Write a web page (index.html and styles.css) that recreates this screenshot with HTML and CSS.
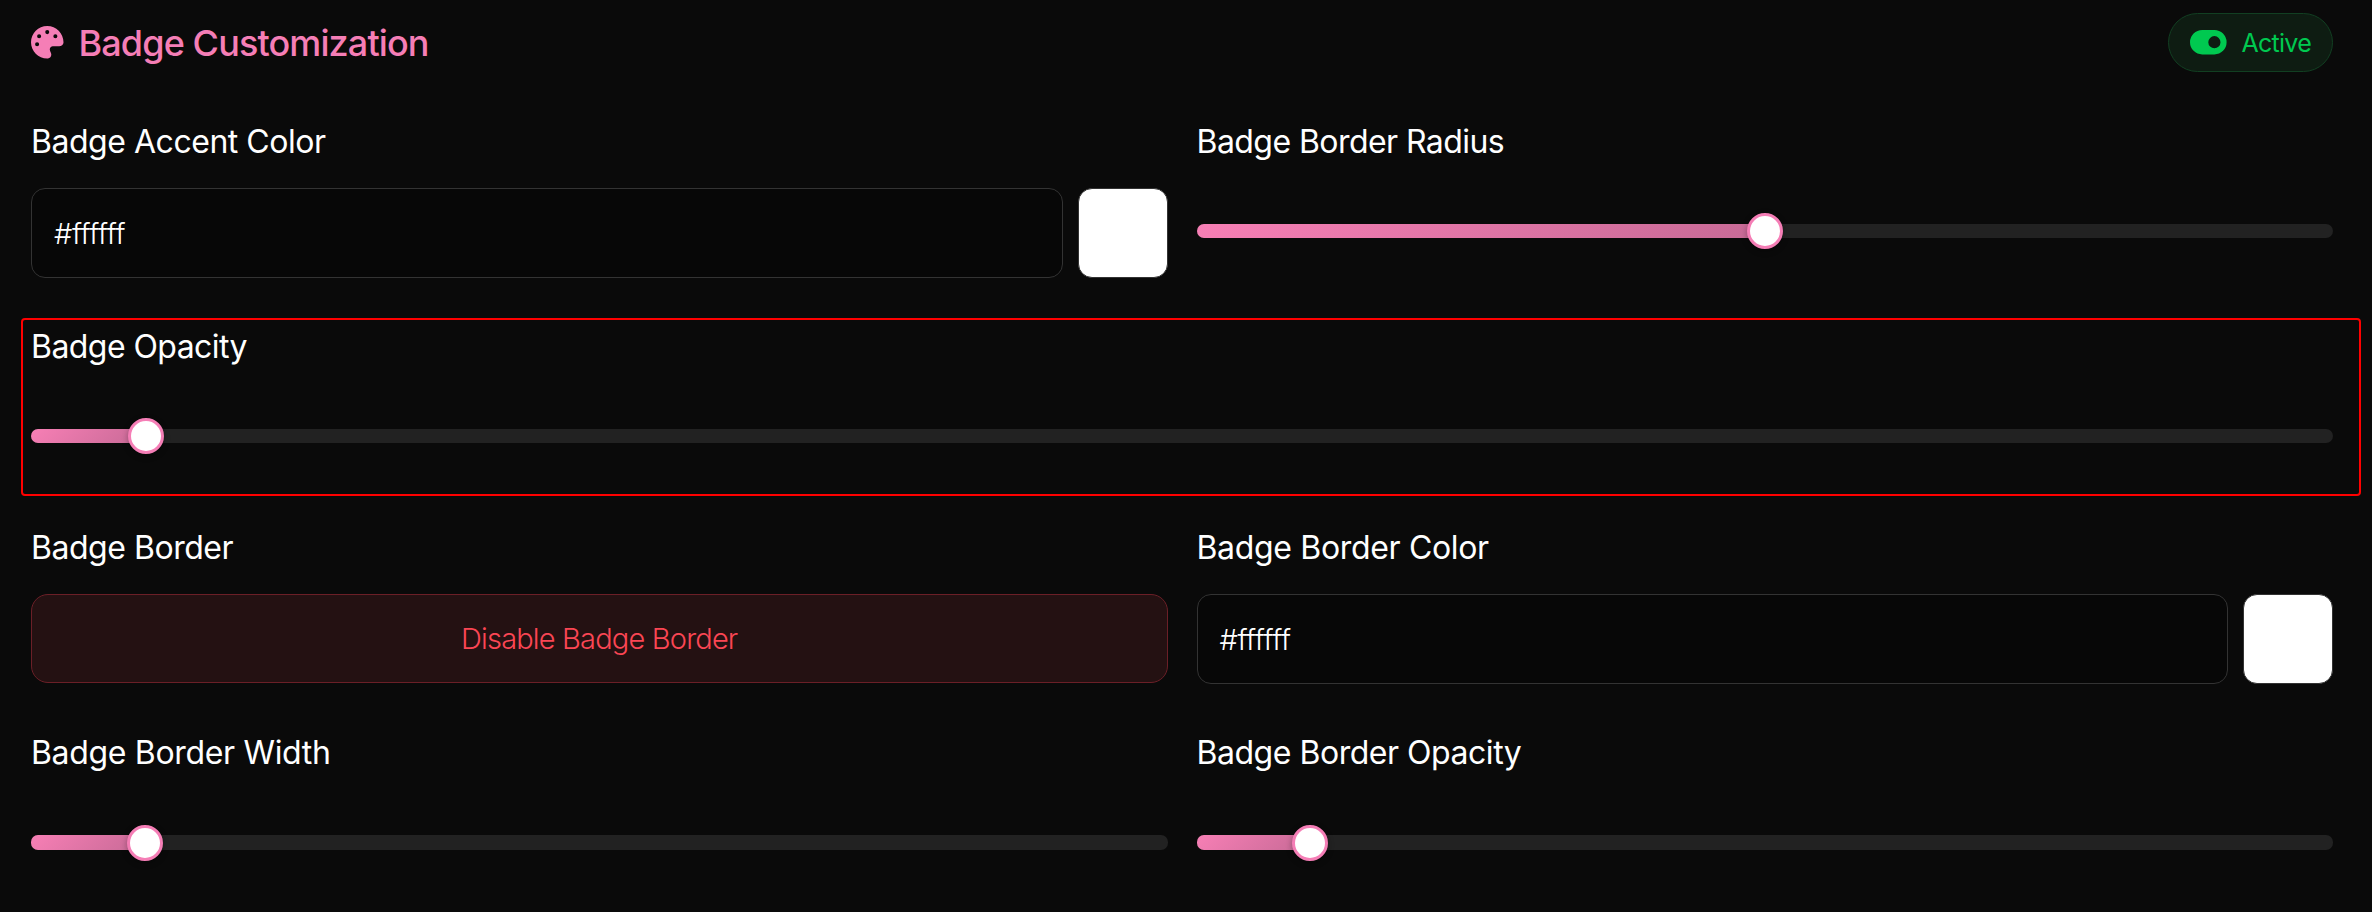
FILE: index.html
```html
<!DOCTYPE html>
<html lang="en">
<head>
<meta charset="utf-8">
<title>Badge Customization</title>
<link rel="stylesheet" href="styles.css">
</head>
<body>
<main class="panel">
  <header class="header">
    <h1 class="title">
      <svg class="title-icon" viewBox="0 0 512 512" fill="currentColor"><path d="M512 256c0 .9 0 1.800 0 2.700c-.4 36.500-33.600 61.300-70.100 61.300L344 320c-26.500 0-48 21.500-48 48c0 3.400 .4 6.700 1 9.900c2.100 10.200 6.500 20 10.800 29.900c6.100 13.800 12.100 27.500 12.100 42c0 31.800-21.600 60.700-53.400 62c-3.500 .1-7 .2-10.600 .2C114.600 512 0 397.400 0 256S114.600 0 256 0S512 114.600 512 256zM128 288a32 32 0 1 0 -64 0 32 32 0 1 0 64 0zm0-96a32 32 0 1 0 0-64 32 32 0 1 0 0 64zM288 96a32 32 0 1 0 -64 0 32 32 0 1 0 64 0zm96 96a32 32 0 1 0 0-64 32 32 0 1 0 0 64z"/></svg>
      <span>Badge Customization</span>
    </h1>
    <div class="status">
      <svg class="status-icon" viewBox="0 0 36.600 24.400" fill="currentColor"><path fill-rule="evenodd" d="M12.200 0H24.400a12.200 12.200 0 0 1 0 24.400H12.200a12.200 12.200 0 0 1 0-24.400zM24.400 6.100a6.100 6.100 0 1 0 0 12.200a6.100 6.100 0 1 0 0-12.200z"/></svg>
      <span class="status-text">Active</span>
    </div>
  </header>

  <section class="grid">
    <div class="field">
      <div class="label">Badge Accent Color</div>
      <div class="color-row"><div class="input"><span class="hex">#ffffff</span></div><div class="swatch"></div></div>
    </div>
    <div class="field">
      <div class="label tight">Badge Border Radius</div>
      <div class="slider"><div class="fill" style="width:50%"></div><div class="knob" style="left:50%"></div></div>
    </div>
    <div class="field wide">
      <div class="label tight">Badge Opacity</div>
      <div class="slider"><div class="fill" style="width:5%"></div><div class="knob" style="left:5%"></div></div>
    </div>
    <div class="field">
      <div class="label">Badge Border</div>
      <div class="button">Disable Badge Border</div>
    </div>
    <div class="field">
      <div class="label loose">Badge Border Color</div>
      <div class="color-row"><div class="input"><span class="hex">#ffffff</span></div><div class="swatch"></div></div>
    </div>
    <div class="field">
      <div class="label loose">Badge Border Width</div>
      <div class="slider low"><div class="fill" style="width:10%"></div><div class="knob" style="left:10%"></div></div>
    </div>
    <div class="field">
      <div class="label">Badge Border Opacity</div>
      <div class="slider low"><div class="fill" style="width:10%"></div><div class="knob" style="left:10%"></div></div>
    </div>
  </section>
</main>
</body>
</html>
```
FILE: styles.css
```css
* { box-sizing: border-box; }
body {
  margin: 0;
  background: #0a0a0a;
  color: #fff;
  font-family: Inter, "Liberation Sans", sans-serif;
}
.panel { height: 912px; padding: 13px 39px 0 31px; overflow: hidden; }
.header { display: flex; justify-content: space-between; align-items: center; height: 59px; margin-bottom: 49px; }
.title { display: flex; align-items: center; gap: 15px; margin: 0; color: #f57eb6; font-size: 36px; line-height: 44px; font-weight: 500; letter-spacing: -.88px; white-space: nowrap; }
.title-icon { width: 32.5px; height: 32.5px; }
.status {
  display: flex; align-items: center; gap: 15px;
  width: 165px; height: 59px; padding-left: 21px;
  border: 1px solid #123f22; border-radius: 30px;
  background: #0e1c12; color: #00c950; font-size: 25px; letter-spacing: -.75px;
}
.status-text { padding-top: 1px; }
.status-icon { flex: none; width: 36.6px; height: 24.4px; }
.grid { display: grid; grid-template-columns: 1fr 1fr; column-gap: 29px; row-gap: 48px; grid-template-rows: 157px 153px 157px 153px; }
.field { position: relative; display: flex; flex-direction: column; }
.label { height: 40px; font-size: 32px; line-height: 42px; font-weight: 400; letter-spacing: -.47px; white-space: nowrap; }
.tight { letter-spacing: -.56px; }
.loose { letter-spacing: -.33px; }
.wide { grid-column: 1 / -1; }
/* Highlight frame around the opacity setting */
.wide::after {
  content: ""; position: absolute; inset: -8px -28px -17px -10px;
  border: 2px solid #f00; border-radius: 4px;
}
.color-row { display: flex; gap: 15px; margin-top: 27px; }
.input { flex: 1; height: 90px; padding-left: 22px; border: 1px solid #333; border-radius: 14px; background: #070707; font-size: 29px; line-height: 89px; }
.swatch { width: 90px; height: 90px; border: 1px solid #333; border-radius: 14px; background: #fff; }
.button {
  height: 89px; margin-top: 27px; border: 1px solid #6b1f27; border-radius: 17px;
  background: #241112; color: #fb4654; text-align: center; font-size: 29px; line-height: 88px; font-weight: 300; letter-spacing: -.83px;
}
.hex { font-weight: 300; letter-spacing: -.45px; }
.slider { position: relative; height: 14px; margin-top: 63px; border-radius: 7px; background: #222; }
.low { height: 15px; }
.fill { height: 100%; border-radius: 7px 0 0 7px; background: linear-gradient(135deg, #f77fb5, #c76a96); }
.knob {
  position: absolute; top: 50%; width: 36px; height: 36px; transform: translate(-50%, -50%);
  border: 3px solid #f57eb6; border-radius: 50%; background: #fff; box-shadow: 0 2px 6px rgba(0,0,0,.3);
}
```
